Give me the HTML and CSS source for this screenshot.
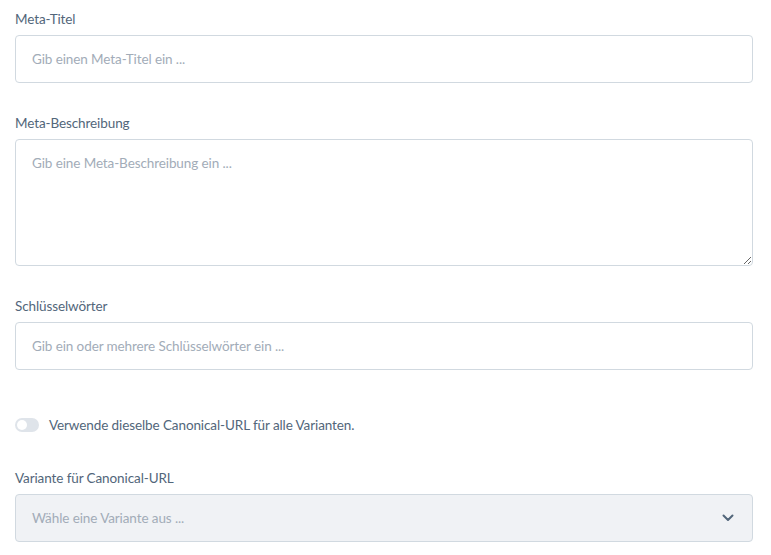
FILE: index.html
```html
<!DOCTYPE html>
<html lang="de">
<head>
<meta charset="utf-8">
<title>SEO</title>
<link rel="stylesheet" href="styles.css">
</head>
<body>
<div class="form">
  <div class="field">
    <label class="label" for="title">Meta-Titel</label>
    <input class="input" id="title" type="text" placeholder="Gib einen Meta-Titel ein ...">
  </div>
  <div class="field">
    <label class="label" for="desc">Meta-Beschreibung</label>
    <textarea class="input textarea" id="desc" placeholder="Gib eine Meta-Beschreibung ein ..."></textarea>
  </div>
  <div class="field">
    <label class="label" for="kw">Schlüsselwörter</label>
    <input class="input" id="kw" type="text" placeholder="Gib ein oder mehrere Schlüsselwörter ein ...">
  </div>
  <div class="toggle-row">
    <span class="toggle"><span class="knob"></span></span>
    <span class="toggle-label">Verwende dieselbe Canonical-URL für alle Varianten.</span>
  </div>
  <div class="field">
    <label class="label">Variante für Canonical-URL</label>
    <div class="select">
      <span class="select-placeholder">Wähle eine Variante aus ...</span>
      <svg class="chevron" width="12" height="8" viewBox="0 0 12 8"><path d="M1.5 1.5 L6 6 L10.5 1.5" fill="none" stroke="#52667a" stroke-width="2" stroke-linecap="round" stroke-linejoin="round"/></svg>
    </div>
  </div>
</div>
</body>
</html>
```

FILE: styles.css
```css
* { box-sizing: border-box; }
html, body { margin: 0; background: #ffffff; }
body {
  font-family: Lato, "Noto Sans", "Liberation Sans", sans-serif;
  font-size: 14px;
  letter-spacing: -0.1px;
  color: #52667a;
}
.form {
  width: 738px;
  margin-left: 15px;
  padding-top: 9px;
}
.field { margin-bottom: 30px; }
.label {
  display: block;
  font-size: 13.5px;
  line-height: 20px;
  margin-bottom: 6px;
  color: #52667a;
}
.input {
  display: block;
  width: 100%;
  height: 48px;
  border: 1px solid #d1d9e0;
  border-radius: 4px;
  padding: 0 16px;
  font-family: inherit;
  font-size: 13.5px;
  letter-spacing: -0.1px;
  color: #52667a;
  background: #fff;
  outline: none;
}
.input::placeholder { color: #a2acb8; }
.textarea {
  height: 127px;
  padding-top: 13px;
  line-height: 20px;
  resize: vertical;
}
.toggle-row {
  display: flex;
  align-items: center;
  gap: 10px;
  height: 20px;
  margin-top: 45px;
  margin-bottom: 33px;
}
.toggle {
  display: inline-flex;
  align-items: center;
  width: 24px;
  height: 14px;
  border-radius: 7px;
  background: #dfe4ea;
  padding: 2px;
}
.knob {
  width: 10px;
  height: 10px;
  border-radius: 50%;
  background: #ffffff;
}
.toggle-label { font-size: 13.5px; line-height: 20px; }
.select {
  display: flex;
  align-items: center;
  justify-content: space-between;
  height: 48px;
  border: 1px solid #d1d9e0;
  border-radius: 4px;
  background: #f0f2f5;
  padding: 0 18px 0 16px;
}
.select-placeholder { color: #a2acb8; font-size: 13.5px; }
.chevron { display: block; }
```
